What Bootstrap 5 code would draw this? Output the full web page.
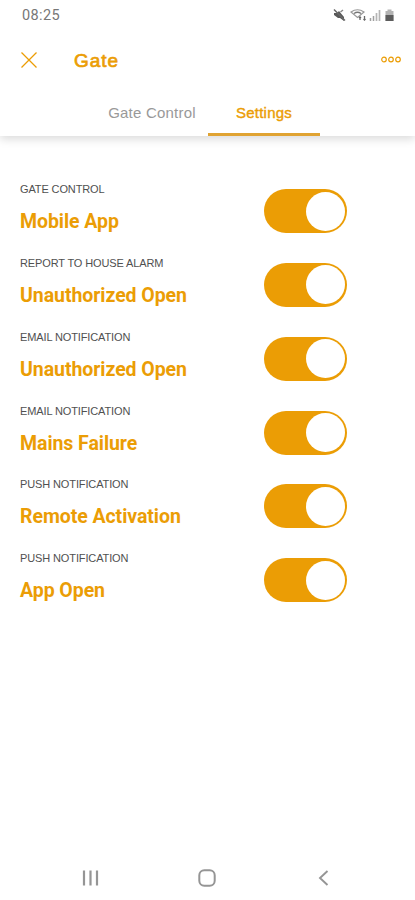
<!DOCTYPE html>
<html lang="en">
<head>
<meta charset="utf-8">
<meta name="viewport" content="width=device-width, initial-scale=1">
<title>Gate settings</title>
<link href="https://cdn.jsdelivr.net/npm/bootstrap@5.3.0/dist/css/bootstrap.min.css" rel="stylesheet">
<style>
:root { --gate: #eb9d05; }
body { font-family: "Liberation Sans", Arial, sans-serif; height: 900px; overflow: hidden; background: #fff; }
svg { display: block; flex: none; }
.status-bar { height: 32px; padding: 0 20px 0 22px; }
.clock { font: 400 14.5px/32px Roboto, sans-serif; color: #777; letter-spacing: .4px; }
.app-bar { height: 56px; padding: 0 13px 0 20px; color: var(--gate); }
.app-title { font-size: 19px; font-weight: 400; -webkit-text-stroke: .7px var(--gate); line-height: 24px; letter-spacing: 1px; margin-left: 36px; padding-top: 1px; }
.gate-tabs { height: 48px; padding-left: 96px; box-shadow: 0 3px 9px rgba(0,0,0,.15); clip-path: inset(0 0 -18px 0); }
.gate-tabs .nav-link { height: 48px; width: 112px; padding: 14px 0 0; font-size: 15px; line-height: 22px; text-align: center; color: #999; letter-spacing: .22px; border-radius: 0; white-space: nowrap; }
.gate-tabs .nav-link.active { color: var(--gate); -webkit-text-stroke: .4px var(--gate); border-bottom: 3px solid #e0a332; }
.settings { padding: 46px 68px 0 20px; }
.setting { height: 73.85px; }
.setting-label { font-size: 11px; line-height: 15px; color: #505050; letter-spacing: -.12px; }
.setting-name { font: 700 19.5px/26px Roboto, sans-serif; color: var(--gate); letter-spacing: -.06px; margin-top: 12px; }
.form-switch .gate-switch.form-check-input { width: 83px; height: 44px; margin: 7px 0 0; border: 0; background-color: var(--gate); background-size: 39px 39px; background-position: right 2.5px center;
  background-image: url("data:image/svg+xml,%3Csvg xmlns='http://www.w3.org/2000/svg' viewBox='0 0 39 39'%3E%3Ccircle cx='19.5' cy='19.5' r='19.5' fill='%23fff'/%3E%3C/svg%3E"); border-radius: 22px; }
.system-nav { height: 46px; padding: 2px 86px 0 82px; color: #959595; }
.home-icon { margin-right: 4px; }
</style>
</head>
<body class="d-flex flex-column">
<div class="status-bar d-flex justify-content-between align-items-center">
  <span class="clock">08:25</span>
  <svg width="62" height="16" viewBox="333 8 62 16" fill="none" stroke="#686868">
    <path d="M334 13h3l2-2 5 6v4l-4-3h-2l-4-3z" fill="#595959" stroke="none"/>
    <path d="M334 9.500l11 11" stroke-width="1.500"/><path d="M340.500 12l2.500-2" stroke="#888" stroke-width="1.500"/>
    <path d="M351 12q6.500-4.500 13 0l-6.500 5.500z" stroke="#999" stroke-width="1.200"/><path d="M354 13.500q3.500-2.500 7 0" stroke="#777" stroke-width="1.400"/>
    <path d="M360 20v-3m-1 1 1-1 1 1M364.500 16v4m-1-1 1 1 1-1" stroke-width="1.300"/>
    <path d="M370.500 18v3M373.500 16v5" stroke="#a0a0a0" stroke-width="1.500"/><path d="M376.500 13v8M379.500 10v11" stroke="#b5b5b5" stroke-width="1.700"/>
    <path d="M385.500 11h2V9.500h4V11h2v10h-8z" fill="#b3b3b3" stroke="none"/><path d="M385.500 15h8v6h-8z" fill="#5c5c5c" stroke="none"/>
  </svg>
</div>
<header class="app-bar d-flex align-items-center">
  <svg width="18" height="18" viewBox="0 0 18 18" fill="none" stroke="currentColor" stroke-width="1.3"><path d="M1.500 1.500l15 15M16.500 1.500l-15 15"/></svg>
  <span class="app-title">Gate</span>
  <svg class="ms-auto" width="22" height="8" viewBox="0 0 22 8" fill="none" stroke="currentColor" stroke-width="1.2"><circle cx="4" cy="3.500" r="2.300"/><circle cx="11" cy="3.500" r="2.300"/><circle cx="18" cy="3.500" r="2.300"/></svg>
</header>
<nav class="gate-tabs nav flex-nowrap">
  <a class="nav-link" href="#">Gate Control</a>
  <a class="nav-link active" href="#">Settings</a>
</nav>
<main class="settings flex-grow-1">
  <div class="setting d-flex justify-content-between"><div><div class="setting-label">GATE CONTROL</div><div class="setting-name">Mobile App</div></div><div class="form-switch p-0"><input class="form-check-input gate-switch" type="checkbox" role="switch" aria-label="Mobile App" checked></div></div>
  <div class="setting d-flex justify-content-between"><div><div class="setting-label">REPORT TO HOUSE ALARM</div><div class="setting-name">Unauthorized Open</div></div><div class="form-switch p-0"><input class="form-check-input gate-switch" type="checkbox" role="switch" aria-label="Report unauthorized open" checked></div></div>
  <div class="setting d-flex justify-content-between"><div><div class="setting-label">EMAIL NOTIFICATION</div><div class="setting-name">Unauthorized Open</div></div><div class="form-switch p-0"><input class="form-check-input gate-switch" type="checkbox" role="switch" aria-label="Email unauthorized open" checked></div></div>
  <div class="setting d-flex justify-content-between"><div><div class="setting-label">EMAIL NOTIFICATION</div><div class="setting-name">Mains Failure</div></div><div class="form-switch p-0"><input class="form-check-input gate-switch" type="checkbox" role="switch" aria-label="Mains Failure" checked></div></div>
  <div class="setting d-flex justify-content-between"><div><div class="setting-label">PUSH NOTIFICATION</div><div class="setting-name">Remote Activation</div></div><div class="form-switch p-0"><input class="form-check-input gate-switch" type="checkbox" role="switch" aria-label="Remote Activation" checked></div></div>
  <div class="setting d-flex justify-content-between"><div><div class="setting-label">PUSH NOTIFICATION</div><div class="setting-name">App Open</div></div><div class="form-switch p-0"><input class="form-check-input gate-switch" type="checkbox" role="switch" aria-label="App Open" checked></div></div>
</main>
<footer class="system-nav d-flex justify-content-between align-items-center">
  <svg width="18" height="18" viewBox="0 0 18 18" stroke="currentColor" stroke-width="2.200"><path d="M2 1.500v15M8.500 1.500v15M15 1.500v15"/></svg>
  <svg class="home-icon" width="18" height="18" viewBox="0 0 18 18" fill="none" stroke="currentColor" stroke-width="2"><rect x="1.300" y="1.300" width="15.400" height="15.400" rx="5"/></svg>
  <svg width="11" height="18" viewBox="0 0 11 18" fill="none" stroke="currentColor" stroke-width="1.900"><path d="M9.500 2L2 9l7.500 7"/></svg>
</footer>
<script src="https://cdn.jsdelivr.net/npm/bootstrap@5.3.0/dist/js/bootstrap.bundle.min.js"></script>
</body>
</html>
